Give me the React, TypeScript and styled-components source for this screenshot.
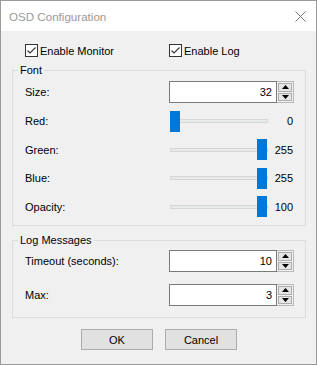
import React from "react";
import styled, {createGlobalStyle} from "styled-components";

const GlobalStyle = createGlobalStyle`
  html, body {
    margin: 0;
    padding: 0;
    background: #ffffff;
  }
  body {
    font-family: "Liberation Sans", Arial, sans-serif;
    font-size: 11px;
    color: #000;
  }
`

const Window = styled.div`
  width: 317px;
  height: 365px;
  box-sizing: border-box;
  border: 1px solid #9a9a9a;
  display: flex;
  flex-direction: column;
  background: #f0f0f0;
`

const TitleBar = styled.div`
  height: 30px;
  flex: none;
  background: #ffffff;
  display: flex;
  align-items: center;
  justify-content: space-between;
  padding-left: 8px;
  padding-right: 10px;
  color: #999999;
  font-size: 11.6px;
`

const Body = styled.div`
  flex: 1;
  padding: 12px 10px 0 11px;
  display: flex;
  flex-direction: column;
`

const CheckRow = styled.div`
  height: 15px;
  display: flex;
  align-items: center;
  padding-left: 13px;
  margin-bottom: 6px;
`

const CheckItem = styled.label<{ $width?: number }>`
  display: inline-flex;
  align-items: center;
  gap: 2px;
  width: ${({$width}) => ($width ? `${$width}px` : 'auto')};
`

const Group = styled.fieldset<{ $padTop: number, $padBottom: number, $gap: number }>`
  margin: 0;
  min-width: 0;
  border: 1px solid #dcdcdc;
  padding: ${({$padTop, $padBottom}) => `${$padTop}px 11px ${$padBottom}px 12px`};
  display: flex;
  flex-direction: column;
  gap: ${({$gap}) => $gap}px;
  & + & {
    margin-top: 8px;
  }
`

const Legend = styled.legend`
  padding: 0 2px;
  margin-left: -7px;
  line-height: 13px;
  font-size: 11px;
`

const Row = styled.div<{ $height: number }>`
  display: flex;
  align-items: center;
  height: ${({$height}) => $height}px;
`

const Label = styled.div<{ $width: number }>`
  width: ${({$width}) => $width}px;
  flex: none;
`

const SpinBox = styled.div`
  display: flex;
  height: 22px;
`

const SpinField = styled.div`
  width: 108px;
  box-sizing: border-box;
  border: 1px solid #7a7a7a;
  background: #ffffff;
  display: flex;
  align-items: center;
  justify-content: flex-end;
  padding-right: 4px;
`

const SpinButtons = styled.div`
  width: 17px;
  box-sizing: border-box;
  border: 1px solid #b9b9b9;
  border-left: none;
  background: #f0f0f0;
  padding: 1px;
  display: flex;
  flex-direction: column;
  gap: 1px;
`

const SpinButton = styled.div`
  flex: 1;
  border: 1px solid #adadad;
  background: #e5e5e5;
  display: flex;
  align-items: center;
  justify-content: center;
`

const Slider = styled.div`
  position: relative;
  width: 98px;
  height: 21px;
  display: flex;
  align-items: center;
`

const Rail = styled.div`
  width: 100%;
  height: 4px;
  box-sizing: border-box;
  border: 1px solid #d6d6d6;
  background: #e7eaea;
`

const Thumb = styled.div`
  position: absolute;
  top: 0;
  width: 10px;
  height: 21px;
  background: #0078d7;
`

const Value = styled.div`
  width: 25px;
  text-align: right;
`

const ButtonRow = styled.div`
  display: flex;
  justify-content: center;
  gap: 12px;
  margin-top: 11px;
`

const Button = styled.button`
  width: 72px;
  height: 21px;
  box-sizing: border-box;
  border: 1px solid #adadad;
  background: #e1e1e1;
  font-family: "Liberation Sans", Arial, sans-serif;
  font-size: 11px;
  color: #000;
  padding: 0;
`

function CheckBox() {
    return (
        <svg width="13" height="13" viewBox="0 0 13 13">
            <rect x="0.5" y="0.5" width="12" height="12" fill="#fff" stroke="#333"/>
            <polyline points="2.5,6.5 5,9 10.5,3.5" fill="none" stroke="#333" strokeWidth="1.1"/>
        </svg>
    )
}

function Spinner({value}: { value: number }) {
    return (
        <SpinBox>
            <SpinField>{value}</SpinField>
            <SpinButtons>
                <SpinButton>
                    <svg width="7" height="4" viewBox="0 0 7 4"><polygon points="3.5,0 7,4 0,4" fill="#000"/></svg>
                </SpinButton>
                <SpinButton>
                    <svg width="7" height="4" viewBox="0 0 7 4"><polygon points="0,0 7,0 3.5,4" fill="#000"/></svg>
                </SpinButton>
            </SpinButtons>
        </SpinBox>
    )
}

function SliderRow({label, value, max}: { label: string, value: number, max: number }) {
    const left = Math.round((value / max) * 87)
    return (
        <Row $height={21}>
            <Label $width={145}>{label}</Label>
            <Slider>
                <Rail/>
                <Thumb style={{left}}/>
            </Slider>
            <Value>{value}</Value>
        </Row>
    )
}

export default function App() {
    return (
        <>
            <GlobalStyle/>
            <Window>
                <TitleBar>
                    <span>OSD Configuration</span>
                    <svg width="11" height="11" viewBox="0 0 11 11">
                        <path d="M0.5 0.5 L10.5 10.5 M10.5 0.5 L0.5 10.5" stroke="#777" strokeWidth="1"/>
                    </svg>
                </TitleBar>
                <Body>
                    <CheckRow>
                        <CheckItem $width={144}><CheckBox/>Enable Monitor</CheckItem>
                        <CheckItem><CheckBox/>Enable Log</CheckItem>
                    </CheckRow>
                    <Group $padTop={4} $padBottom={8} $gap={7.5}>
                        <Legend>Font</Legend>
                        <Row $height={22}>
                            <Label $width={144}>Size:</Label>
                            <Spinner value={32}/>
                        </Row>
                        <SliderRow label="Red:" value={0} max={255}/>
                        <SliderRow label="Green:" value={255} max={255}/>
                        <SliderRow label="Blue:" value={255} max={255}/>
                        <SliderRow label="Opacity:" value={100} max={100}/>
                    </Group>
                    <Group $padTop={3} $padBottom={11} $gap={12}>
                        <Legend>Log Messages</Legend>
                        <Row $height={22}>
                            <Label $width={144}>Timeout (seconds):</Label>
                            <Spinner value={10}/>
                        </Row>
                        <Row $height={22}>
                            <Label $width={144}>Max:</Label>
                            <Spinner value={3}/>
                        </Row>
                    </Group>
                    <ButtonRow>
                        <Button>OK</Button>
                        <Button>Cancel</Button>
                    </ButtonRow>
                </Body>
            </Window>
        </>
    )
}
